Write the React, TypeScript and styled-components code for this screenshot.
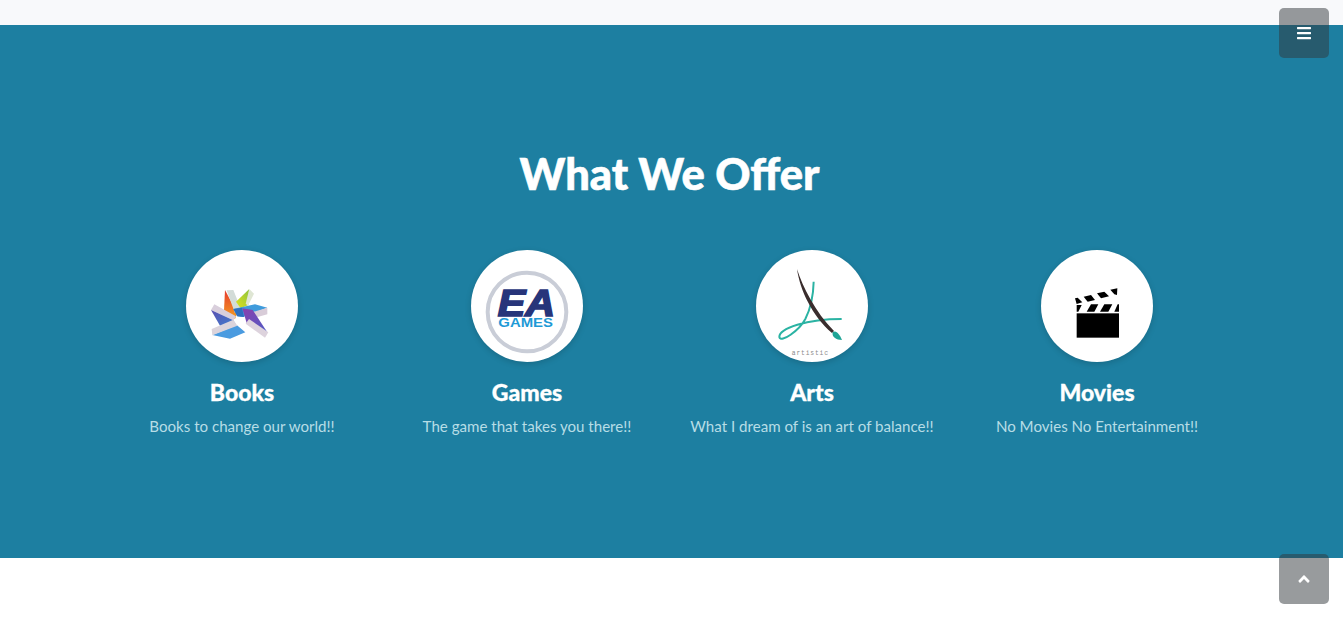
import React from 'react'
import styled, { createGlobalStyle } from 'styled-components'
import { FaBars, FaAngleUp } from 'react-icons/fa'

const GlobalStyle = createGlobalStyle`
  html, body {
    margin: 0;
    padding: 0;
    background: #fff;
    font-family: "Lato", "Noto Sans", sans-serif;
  }
`
const Page = styled.div`
  height: 617px;
  overflow: hidden;
  background: #fff;
`
const TopStrip = styled.div`
  height: 25px;
  background: #f8f9fb;
`
const Section = styled.section`
  height: 533px;
  box-sizing: border-box;
  padding: 120px 4px 0 0;
  background: #1d7fa1;
`
const Container = styled.div`
  width: 1140px;
  margin: 0 auto;
`
const Title = styled.h2`
  margin: 0 0 48px;
  height: 57px;
  line-height: 57px;
  text-align: center;
  font-size: 43.5px;
  font-weight: 900;
  -webkit-text-stroke: 0.6px #fff;
  color: #fff;
`
const Grid = styled.div`
  display: grid;
  grid-template-columns: repeat(4, 285px);
`
const Feature = styled.div`
  display: flex;
  flex-direction: column;
  align-items: center;
`
const Circle = styled.div`
  width: 112px;
  height: 112px;
  border-radius: 50%;
  overflow: hidden;
  background: #fff;
  box-shadow: 0 2px 6px rgba(0, 0, 0, 0.16);
  svg {
    display: block;
  }
`
const Name = styled.h3`
  margin: 15px 0 0;
  height: 30px;
  line-height: 30px;
  font-size: 23px;
  font-weight: 900;
  -webkit-text-stroke: 0.3px #fff;
  color: #fff;
`
const Tagline = styled.p`
  margin: 6px 0 0;
  line-height: 26px;
  font-size: 15.1px;
  color: #b7dde6;
`
const FloatButton = styled.button<{ $top: number }>`
  position: fixed;
  top: ${p => p.$top}px;
  left: 1279px;
  width: 50px;
  height: 50px;
  padding: 0;
  border: 0;
  border-radius: 5px;
  display: flex;
  align-items: center;
  justify-content: center;
  color: #fff;
  background: rgba(50, 55, 60, 0.5);
`

// logos below are traced in the coordinates of a 375px crop, circle sits at 18,15
const BooksLogo = () => (
  <svg width="112" height="112" viewBox="18 15 336 336">
    <defs>
      <linearGradient id="flame" x1="0" y1="0" x2="0" y2="1">
        <stop offset="0" stopColor="#e5392c" />
        <stop offset="1" stopColor="#f5a020" />
      </linearGradient>
      <linearGradient id="leaf" x1="1" y1="0" x2="0" y2="1">
        <stop offset="0" stopColor="#8fc43c" />
        <stop offset="1" stopColor="#dfe21e" />
      </linearGradient>
      <linearGradient id="violet" x1="0" y1="0" x2="1" y2="1">
        <stop offset="0" stopColor="#8a3fae" />
        <stop offset="1" stopColor="#4f5cc4" />
      </linearGradient>
      <linearGradient id="indigo" x1="0" y1="0" x2="1" y2="1">
        <stop offset="0" stopColor="#5a4fb0" />
        <stop offset="1" stopColor="#3f7fd0" />
      </linearGradient>
    </defs>
    <polygon points="135,135 132,196 165,222 172,205" fill="url(#flame)" />
    <polygon points="140,136 160,135 182,190 165,205" fill="#d3dcd8" />
    <polygon points="207,133 168,170 182,190 205,180" fill="url(#leaf)" />
    <polygon points="208,132 222,146 204,182 197,176" fill="#dfe6d4" />
    <polygon points="160,192 225,178 262,188 190,216 172,214" fill="#3f9bdc" />
    <polygon points="160,192 186,188 192,216 172,214" fill="#2f6fc0" />
    <polygon points="262,188 262,208 218,220 205,205" fill="#d8ccd8" />
    <polygon points="93,195 103,178 168,214 160,226" fill="#d9cfdc" />
    <polygon points="93,195 160,226 170,244 120,242" fill="url(#indigo)" />
    <polygon points="97,270 170,240 196,262 150,281" fill="#4a9be0" />
    <polygon points="95,252 160,224 172,242 97,271" fill="#dcd4dc" />
    <polygon points="187,190 218,195 262,262 200,234" fill="url(#violet)" />
    <polygon points="197,236 207,222 265,262 255,278" fill="#ddd3dd" />
    <circle cx="180" cy="226" r="7" fill="#fff" />
  </svg>
)

const GamesLogo = () => (
  <svg width="112" height="112" viewBox="18 15 336 336">
    <circle cx="186" cy="201" r="118" fill="none" stroke="#c9cdd7" strokeWidth="12" />
    <text x="184" y="212" textAnchor="middle" textLength="172" lengthAdjust="spacingAndGlyphs" fontFamily="Liberation Sans" fontWeight="700" fontStyle="italic" fontSize="112" stroke="#27357a" strokeWidth="5" fill="#27357a">EA</text>
    <text x="182" y="247" textAnchor="middle" textLength="164" lengthAdjust="spacingAndGlyphs" fontFamily="Liberation Sans" fontWeight="700" fontSize="40" fill="#1e9ad6">GAMES</text>
  </svg>
)

const ArtsLogo = () => (
  <svg width="112" height="112" viewBox="18 15 336 336">
    <path d="M191 110 C190 150 182 190 166 222 C148 256 92 296 88 276 C88 250 170 222 275 222" fill="none" stroke="#2bb3a3" strokeWidth="6" />
    <path d="M141 72 C158 125 195 200 252 258 L246 264 C186 212 150 135 141 72 Z" fill="#3a2d2d" />
    <path d="M248 262 C258 254 268 266 276 285 C258 285 245 276 248 262 Z" fill="#1fa596" />
    <text x="181" y="331" textAnchor="middle" fontFamily="Liberation Mono" fontSize="19" letterSpacing="2.5" fill="#8a8a8a">artistic</text>
  </svg>
)

const MoviesLogo = () => (
  <svg width="112" height="112" viewBox="18 15 336 336">
    <rect x="125" y="205" width="127" height="73" fill="#000" />
    <polygon points="125,180 140,180 130,200 125,200" fill="#000" />
    <polygon points="168,178 190,178 178,200 155,200" fill="#000" />
    <polygon points="208,178 232,178 220,200 195,200" fill="#000" />
    <polygon points="248,178 252,178 252,200 238,200" fill="#000" />
    <polygon points="120,160 128,158 142,172 125,177" fill="#000" />
    <polygon points="146,155 168,150 180,165 158,170" fill="#000" />
    <polygon points="186,145 208,140 222,154 198,160" fill="#000" />
    <polygon points="226,134 247,130 246,150 238,148" fill="#000" />
  </svg>
)

const offers = [
  { name: 'Books', text: 'Books to change our world!!', Logo: BooksLogo },
  { name: 'Games', text: 'The game that takes you there!!', Logo: GamesLogo },
  { name: 'Arts', text: 'What I dream of is an art of balance!!', Logo: ArtsLogo },
  { name: 'Movies', text: 'No Movies No Entertainment!!', Logo: MoviesLogo },
]

export default function App() {
  return (
    <Page>
      <GlobalStyle />
      <TopStrip />
      <Section>
        <Container>
          <Title>What We Offer</Title>
          <Grid>
            {offers.map(({ name, text, Logo }) => (
              <Feature key={name}>
                <Circle>
                  <Logo />
                </Circle>
                <Name>{name}</Name>
                <Tagline>{text}</Tagline>
              </Feature>
            ))}
          </Grid>
        </Container>
      </Section>
      <FloatButton $top={8} aria-label="menu">
        <FaBars size={16} />
      </FloatButton>
      <FloatButton $top={554} aria-label="top">
        <FaAngleUp size={18} />
      </FloatButton>
    </Page>
  )
}
